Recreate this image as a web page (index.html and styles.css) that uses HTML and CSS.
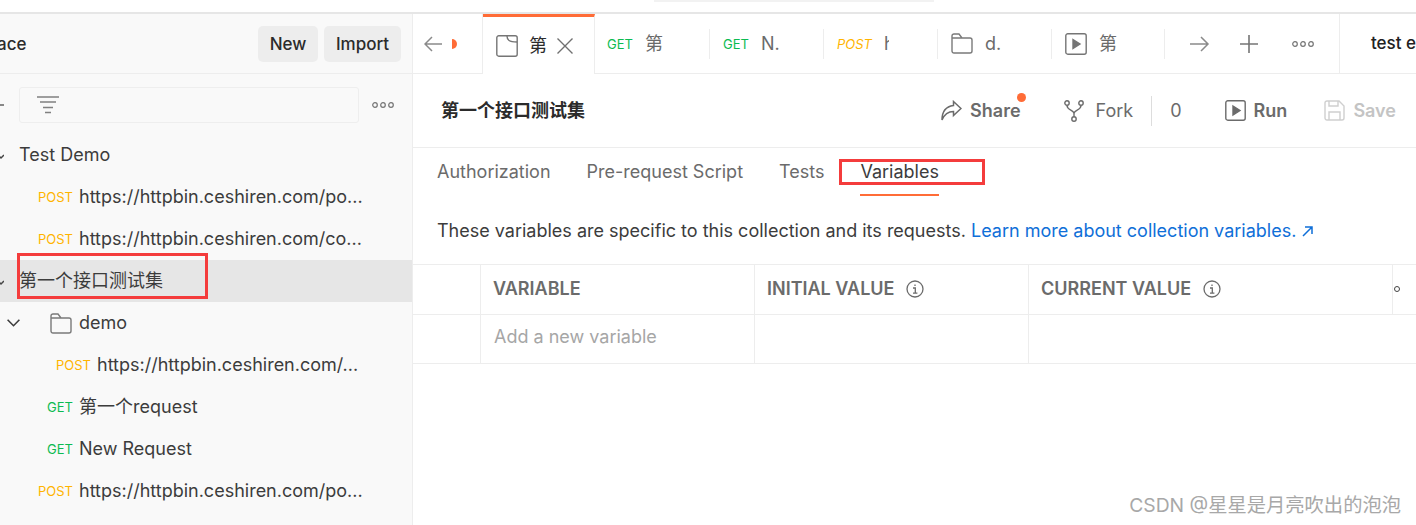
FILE: index.html
```html
<!DOCTYPE html>
<html>
<head>
<meta charset="utf-8">
<title>第一个接口测试集</title>
<link rel="stylesheet" href="styles.css">
</head>
<body>
<div class="topStrip"><div class="topPill"></div></div>

<div class="app">
    <div class="sidebar">
        <div class="sideHead">
            <div class="wsName">ace</div>
            <div class="sideBtns">
                <div class="btn btnNew">New</div>
                <div class="btn btnImport">Import</div>
            </div>
        </div>

        <div class="filterRow">
            <div class="plusCut"></div>
            <div class="filterBox">
                <svg width="22" height="18" viewBox="0 0 22 18" fill="none" stroke="#808080" stroke-width="1.5"><path d="M0 1h22M3 6h16M6 11.500h10M8 16.500h6"/></svg>
            </div>
            <svg class="dots" width="22" height="6" viewBox="0 0 22 6" fill="none" stroke="#757575" stroke-width="1.200"><circle cx="3" cy="3" r="2.300"/><circle cx="11" cy="3" r="2.300"/><circle cx="19" cy="3" r="2.300"/></svg>
        </div>

        <div class="tree">
            <div class="row">
                <div class="caretCut"><svg width="4" height="10" viewBox="0 0 4 10" fill="none" stroke="#444" stroke-width="1.500"><path d="M-4 3l5 5 3-3"/></svg></div>
                <span class="name">Test Demo</span>
            </div>
            <div class="row">
                <span class="method post">POST</span>
                <span class="name">https://httpbin.ceshiren.com/po...</span>
            </div>
            <div class="row">
                <span class="method post">POST</span>
                <span class="name">https://httpbin.ceshiren.com/co...</span>
            </div>
            <div class="row rowSel">
                <div class="caretCut"><svg width="4" height="10" viewBox="0 0 4 10" fill="none" stroke="#444" stroke-width="1.500"><path d="M-4 3l5 5 3-3"/></svg></div>
                <span class="name">第一个接口测试集</span>
            </div>
            <div class="row">
                <svg class="caretDemo" width="13" height="8" viewBox="0 0 13 8" fill="none" stroke="#3c3c3c" stroke-width="1.600"><path d="M.6.8l5.900 5.900L12.400.8"/></svg>
                <svg class="folderDemo" width="22" height="21" viewBox="0 0 22 21" fill="none" stroke="#7a7a7a" stroke-width="1.400"><path d="M1 18V3a2 2 0 0 1 2-2h5l3 4h8a2 2 0 0 1 2 2v11a2 2 0 0 1-2 2H3a2 2 0 0 1-2-2zM1 5h10"/></svg>
                <span class="name">demo</span>
            </div>
            <div class="row">
                <span class="method post deep">POST</span>
                <span class="name">https://httpbin.ceshiren.com/...</span>
            </div>
            <div class="row">
                <span class="method get">GET</span>
                <span class="name">第一个request</span>
            </div>
            <div class="row">
                <span class="method get">GET</span>
                <span class="name">New Request</span>
            </div>
            <div class="row">
                <span class="method post">POST</span>
                <span class="name">https://httpbin.ceshiren.com/po...</span>
            </div>
        </div>
    </div>

    <div class="main">
        <div class="tabBar">
            <div class="tabBack">
                <svg width="18" height="16" viewBox="0 0 18 16" fill="none" stroke="#8a8a8a" stroke-width="1.500"><path d="M18 8H1M8 1L1 8l7 7"/></svg>
                <span class="halfDot"></span>
            </div>
            <div class="tabActive">
                <svg width="22" height="22" viewBox="0 0 22 22" fill="none" stroke="#757575" stroke-width="1.400"><rect x=".8" y=".8" width="20.400" height="20.400" rx="2"/><path d="M11 1c0 4 2 6 10 6"/></svg>
                <span class="tabName dark">第</span>
                <svg width="16" height="16" viewBox="0 0 16 16" fill="none" stroke="#707070" stroke-width="1.400"><path d="M.5.5l15 15M15.500.5l-15 15"/></svg>
            </div>
            <div class="tab tabFirst"><div class="tabIn"><span class="tabMethod get">GET</span><span class="tabName">第</span></div></div>
            <div class="tab"><div class="tabIn"><span class="tabMethod get">GET</span><span class="tabName">N.</span></div></div>
            <div class="tab"><div class="tabIn"><span class="tabMethod post italic">POST</span><span class="tabName tabCut">h</span></div></div>
            <div class="tab"><div class="tabIn">
                <svg width="22" height="21" viewBox="0 0 22 21" fill="none" stroke="#7a7a7a" stroke-width="1.400"><path d="M1 18V3a2 2 0 0 1 2-2h5l3 4h8a2 2 0 0 1 2 2v11a2 2 0 0 1-2 2H3a2 2 0 0 1-2-2zM1 5h10"/></svg>
                <span class="tabName">d.</span>
            </div></div>
            <div class="tab tabLast"><div class="tabIn">
                <svg width="22" height="22" viewBox="0 0 22 22" fill="none" stroke="#757575" stroke-width="1.400"><rect x=".8" y=".8" width="20.400" height="20.400" rx="2"/><path d="M8 6.500l7 4.500-7 4.500z" fill="#757575"/></svg>
                <span class="tabName">第</span>
            </div></div>
            <div class="tabTools">
                <svg width="20" height="16" viewBox="0 0 20 16" fill="none" stroke="#8a8a8a" stroke-width="1.500"><path d="M0 8h18M11 1l7 7-7 7"/></svg>
                <svg class="toolPlus" width="18" height="18" viewBox="0 0 18 18" fill="none" stroke="#757575" stroke-width="1.600"><path d="M9 0v18M0 9h18"/></svg>
                <svg class="toolDots" width="22" height="6" viewBox="0 0 22 6" fill="none" stroke="#757575" stroke-width="1.200"><circle cx="3" cy="3" r="2.300"/><circle cx="11" cy="3" r="2.300"/><circle cx="19" cy="3" r="2.300"/></svg>
            </div>
            <div class="envName">test e</div>
        </div>

        <div class="paneHead">
            <div class="paneTitle">第一个接口测试集</div>
            <div class="paneActions">
                <svg width="21" height="21" viewBox="0 0 21 21" fill="none" stroke="#6b6b6b" stroke-width="1.500"><path d="M12.500 1.500l7.500 7-7.500 7v-4C7 11.500 3.500 14 1 20c0-8 4-13.500 11.500-14.500z"/></svg>
                <span class="actBold share">Share<span class="notifyDot"></span></span>
                <svg class="forkIcon" width="20" height="22" viewBox="0 0 20 22" fill="none" stroke="#6b6b6b" stroke-width="1.400"><circle cx="3" cy="3" r="2.200"/><circle cx="17" cy="3" r="2.200"/><circle cx="10" cy="19" r="2.200"/><path d="M3 5.500c0 5 7 4 7 8v3M17 5.500c0 5-7 4-7 8"/></svg>
                <span class="actPlain fork">Fork</span>
                <span class="actDivider"></span>
                <span class="actPlain count">0</span>
                <svg class="runIcon" width="21" height="21" viewBox="0 0 21 21" fill="none" stroke="#6b6b6b" stroke-width="1.400"><rect x=".8" y=".8" width="19.400" height="19.400" rx="2"/><path d="M8 6l7 4.500L8 15z" fill="#6b6b6b"/></svg>
                <span class="actBold run">Run</span>
                <svg class="saveIcon" width="21" height="21" viewBox="0 0 21 21" fill="none" stroke="#cfcfcf" stroke-width="1.400"><path d="M1 3a2 2 0 0 1 2-2h12l5 5v12a2 2 0 0 1-2 2H3a2 2 0 0 1-2-2zM5 1v5h9V1M5 20v-8h11v8"/></svg>
                <span class="actBold save">Save</span>
            </div>
        </div>

        <div class="subTabs">
            <div class="subTab">Authorization</div>
            <div class="subTab">Pre-request Script</div>
            <div class="subTab">Tests</div>
            <div class="subTab subTabOn">Variables</div>
        </div>

        <div class="descLine">These variables are specific to this collection and its requests. <a class="learn" href="#">Learn more about collection variables. <svg width="11" height="11" viewBox="0 0 11 11" fill="none" stroke="#0f6fd8" stroke-width="1.500"><path d="M1 10L10 1M3 1h7v7"/></svg></a></div>

        <div class="varTable">
            <div class="varRow varHead">
                <div class="cell cellBlank"></div>
                <div class="cell">VARIABLE</div>
                <div class="cell">INITIAL VALUE
                    <svg class="infoIcon" width="18" height="18" viewBox="0 0 18 18" fill="none" stroke="#6b6b6b" stroke-width="1.300"><circle cx="9" cy="9" r="8"/><path d="M7 8h2.300v5M7 13.200h4.400M9 4.500v1.600"/></svg>
                </div>
                <div class="cell">CURRENT VALUE
                    <svg class="infoIcon" width="18" height="18" viewBox="0 0 18 18" fill="none" stroke="#6b6b6b" stroke-width="1.300"><circle cx="9" cy="9" r="8"/><path d="M7 8h2.300v5M7 13.200h4.400M9 4.500v1.600"/></svg>
                </div>
                <div class="cell cellLast"><span class="ringDot"></span></div>
            </div>
            <div class="varRow">
                <div class="cell cellBlank"></div>
                <div class="cell cellHint">Add a new variable</div>
                <div class="cell"></div>
                <div class="cell cellLast"></div>
            </div>
        </div>
    </div>
</div>

<!-- red boxes and watermark drawn over the screenshot -->
<div class="markBox markTree"></div>
<div class="markBox markTab"></div>
<div class="watermark">CSDN @星星是月亮吹出的泡泡</div>
</body>
</html>
```

FILE: styles.css
```css
*{
    box-sizing: border-box;
}

html, body{
    margin: 0;
    height: 100%;
    overflow: hidden;
}

body{
    position: relative;
    background-color: #fff;
    color: #3c3c3c;
    font-family: Inter, "Noto Sans CJK SC", sans-serif;
    font-size: 18px;
    line-height: 24px;
}

svg{
    display: block;
    flex-shrink: 0;
}

.topStrip{
    height: 14px;
    border-bottom: 2px solid #e6e6e6;
}

.topPill{
    width: 280px;
    height: 2px;
    margin-left: 654px;
    background-color: #f2f2f2;
}

.app{
    display: flex;
    height: 511px;
}

/* sidebar */
.sidebar{
    width: 413px;
    flex-shrink: 0;
    background-color: #f9f9f9;
    border-right: 1px solid #ededed;
}

.sideHead{
    display: flex;
    align-items: center;
    justify-content: space-between;
    height: 60px;
    padding-right: 11px;
    border-bottom: 1px solid #ededed;
}

.wsName{
    text-indent: -3px;
    font-size: 17px;
    font-weight: 500;
    color: #2b2b2b;
}

.sideBtns{
    display: flex;
    gap: 6px;
}

.btn{
    height: 36px;
    line-height: 36px;
    text-align: center;
    background-color: #ededed;
    border-radius: 5px;
    font-size: 17px;
    font-weight: 500;
    color: #2b2b2b;
}

.btnNew{
    width: 60px;
}

.btnImport{
    width: 77px;
}

.filterRow{
    display: flex;
    align-items: center;
    height: 60px;
    padding-top: 1px;
}

.plusCut{
    width: 4px;
    height: 2px;
    margin-right: 15px;
    background-color: #888;
}

.filterBox{
    display: flex;
    align-items: center;
    width: 340px;
    height: 36px;
    padding-left: 17px;
    border: 1px solid #eee;
    border-radius: 3px;
}

.dots{
    margin-left: 13px;
}

.row{
    display: flex;
    align-items: center;
    height: 42px;
}

.rowSel{
    background-color: #e6e6e6;
}

.caretCut{
    width: 19px;
}

.caretDemo{
    margin-left: 7px;
}

.folderDemo{
    margin-left: 30px;
    margin-right: 7px;
}

.method{
    width: 73px;
    margin-right: 6px;
    text-align: right;
    font-size: 13px;
}

.deep{
    width: 91px;
}

.post{
    color: #ffb400;
}

.get{
    color: #0cbb52;
}

.name{
    white-space: nowrap;
}

/* tabs */
.main{
    flex: 1;
    min-width: 0;
    overflow: hidden;
}

.tabBar{
    display: flex;
    height: 60px;
    border-bottom: 1px solid #ededed;
}

.tabBack{
    display: flex;
    flex-shrink: 0;
    align-items: center;
    width: 70px;
    height: 60px;
    padding-left: 11px;
    border-right: 1px solid #ededed;
}

.halfDot{
    width: 5px;
    height: 10px;
    margin-left: 10px;
    background-color: #ff6c37;
    border-radius: 0 5px 5px 0;
}

.tabActive{
    display: flex;
    flex-shrink: 0;
    align-items: center;
    width: 112px;
    height: 60px;
    padding-left: 13px;
    background-color: #fff;
    border-top: 3px solid #ff6c37;
    border-right: 1px solid #ededed;
}

.tabActive .tabName{
    width: 18px;
    margin: 0 10px 0 11px;
}

.tab{
    display: flex;
    flex-shrink: 0;
    align-items: center;
    width: 114px;
}

.tabFirst{
    width: 115px;
}

.tabFirst .tabIn{
    padding-left: 12px;
}

.tabLast{
    width: 113px;
}

.tabIn{
    display: flex;
    align-items: center;
    width: 100%;
    height: 30px;
    padding-left: 13px;
    border-right: 1px solid #ededed;
}

.tabMethod{
    font-size: 13px;
}

.italic{
    font-style: italic;
}

.tabName{
    margin-left: 12px;
    color: #6b6b6b;
    white-space: nowrap;
}

.tabName.dark{
    color: #2b2b2b;
}

.tabCut{
    width: 5px;
    overflow: hidden;
}

.tabTools{
    display: flex;
    flex-shrink: 0;
    align-items: center;
    width: 175px;
    padding-left: 25px;
    border-right: 1px solid #ededed;
}

.toolPlus{
    margin-left: 30px;
}

.toolDots{
    margin-left: 34px;
}

.envName{
    padding-left: 31px;
    font-size: 17px;
    line-height: 58px;
    font-weight: 500;
    color: #212121;
    white-space: nowrap;
}

/* collection header */
.paneHead{
    display: flex;
    align-items: center;
    justify-content: space-between;
    height: 74px;
    padding: 0 20px 0 28px;
    border-bottom: 1px solid #ededed;
}

.paneTitle{
    font-weight: 700;
    color: #2b2b2b;
}

.paneActions{
    display: flex;
    align-items: center;
}

.actBold{
    margin-left: 8px;
    font-weight: 600;
    color: #6b6b6b;
}

.actPlain{
    color: #6b6b6b;
}

.share{
    position: relative;
}

.notifyDot{
    position: absolute;
    top: -6px;
    right: -5px;
    width: 9px;
    height: 9px;
    background-color: #ff6c37;
    border-radius: 50%;
}

.forkIcon{
    margin-left: 43px;
}

.fork{
    margin-left: 12px;
}

.actDivider{
    width: 1px;
    height: 30px;
    margin: 0 18px;
    background-color: #ddd;
}

.runIcon{
    margin-left: 43px;
}

.saveIcon{
    margin-left: 37px;
}

.save{
    color: #c4c4c4;
}

/* sub tabs */
.subTabs{
    display: flex;
    gap: 36px;
    padding: 12px 0 0 24px;
    color: #6b6b6b;
}

.subTab{
    height: 36px;
    line-height: 24px;
}

.subTabOn{
    color: #3c3c3c;
    border-bottom: 2px solid #ff6c37;
}

.descLine{
    margin: 23px 0 21px 24px;
    white-space: nowrap;
}

.learn{
    color: #0f6fd8;
    text-decoration: none;
}

.learn svg{
    display: inline;
    margin-left: 1px;
}

/* variables table */
.varTable{
    border-top: 1px solid #ededed;
}

.varRow{
    display: grid;
    grid-template-columns: 68px 274px 274px 364px 1fr;
    height: 50px;
    border-bottom: 1px solid #ededed;
}

.varRow + .varRow{
    height: 49px;
}

.cell{
    display: flex;
    align-items: center;
    padding-left: 12px;
    border-right: 1px solid #ededed;
    white-space: nowrap;
}

.cellLast{
    border-right: none;
}

.varRow + .varRow .cell:nth-child(4){
    border-right: none;
}

.varHead .cell{
    padding-bottom: 2px;
    font-weight: 600;
    color: #6b6b6b;
}

.infoIcon{
    margin-left: 12px;
}

.cellHint{
    padding-left: 13px;
    padding-bottom: 4px;
    color: #a6a6a6;
}

.ringDot{
    width: 6px;
    height: 6px;
    margin-left: -11px;
    border: 1.5px solid #444;
    border-radius: 50%;
}

/* annotations */
.markBox{
    position: absolute;
    border: 3px solid #f43c3c;
}

.markTree{
    left: 17px;
    top: 253px;
    width: 191px;
    height: 46px;
}

.markTab{
    left: 839px;
    top: 159px;
    width: 146px;
    height: 26px;
}

.watermark{
    position: absolute;
    right: 15px;
    bottom: 8px;
    color: #a8a8a8;
    font-size: 19.300px;
    white-space: nowrap;
}
```
